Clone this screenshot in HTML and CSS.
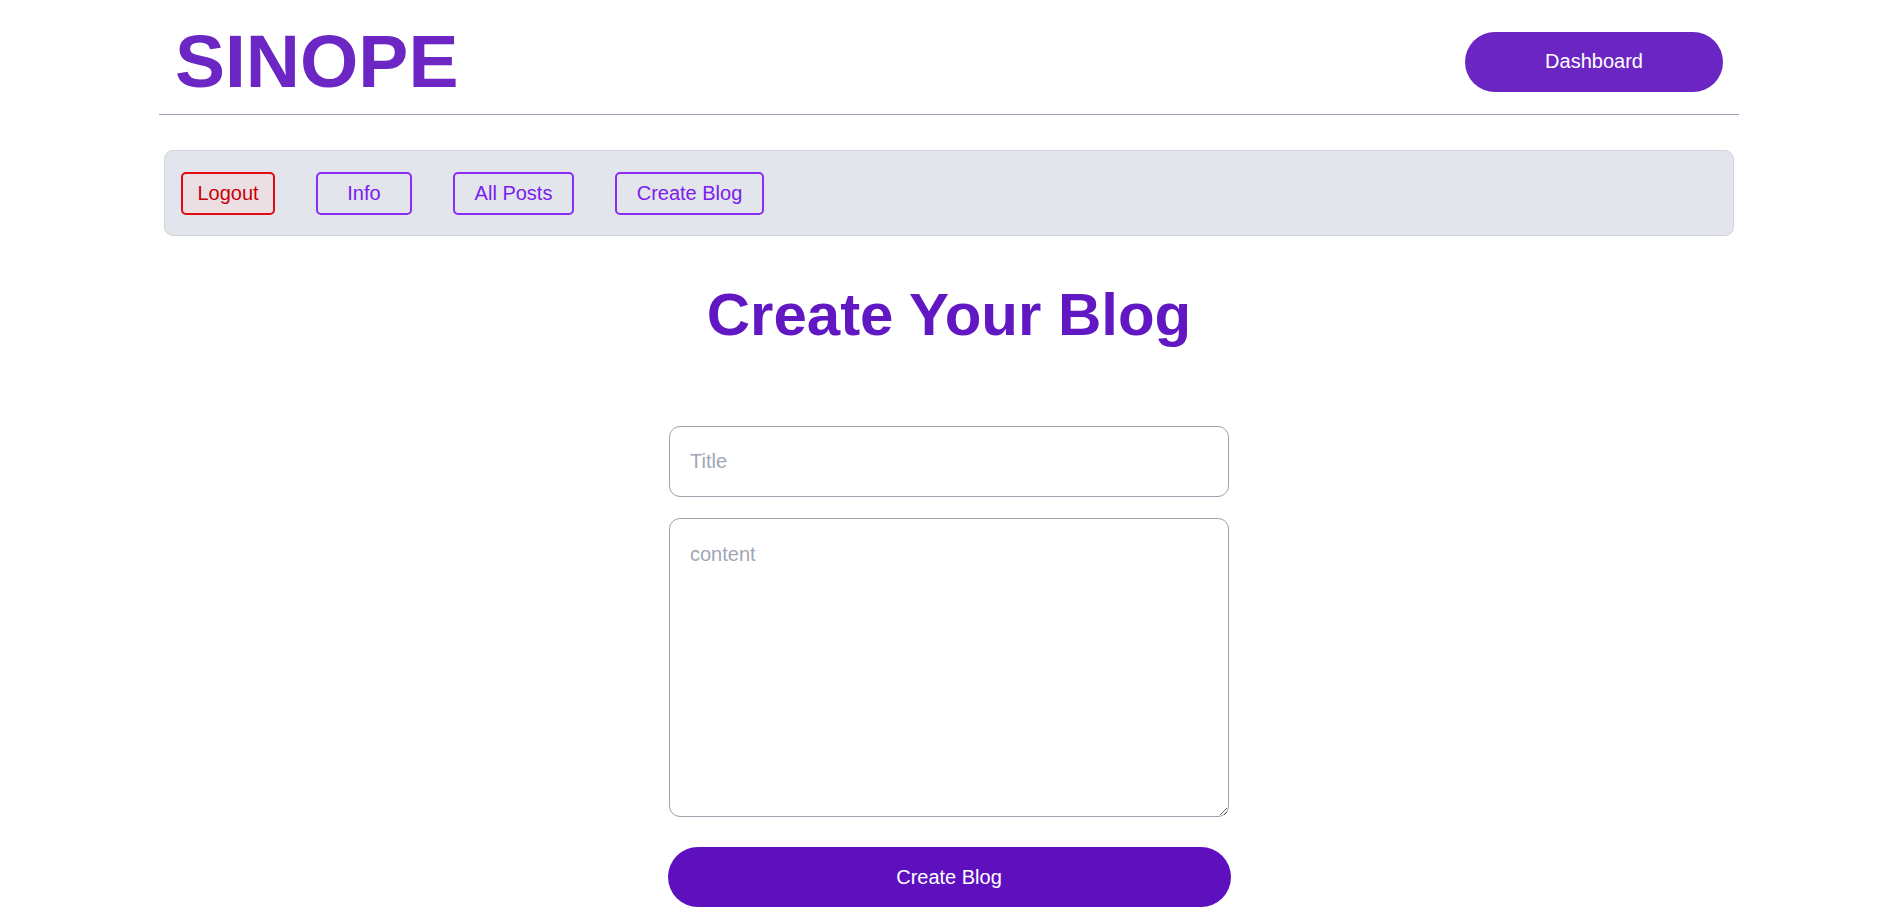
FILE: index.html
```html
<!DOCTYPE html>
<html lang="en">
<head>
<meta charset="utf-8">
<title>SINOPE - Create Blog</title>
<link rel="stylesheet" href="styles.css">
</head>
<body>
<div class="container">
  <header class="header">
    <div class="logo">SINOPE</div>
    <button class="dash-btn">Dashboard</button>
  </header>
  <nav class="nav">
    <button class="nav-btn nav-logout">Logout</button>
    <button class="nav-btn nav-info">Info</button>
    <button class="nav-btn nav-posts">All Posts</button>
    <button class="nav-btn nav-create">Create Blog</button>
  </nav>
  <main class="main">
    <h1 class="title">Create Your Blog</h1>
    <form class="form">
      <input class="field field-title" type="text" placeholder="Title">
      <textarea class="field field-content" placeholder="content"></textarea>
      <button type="button" class="submit-btn">Create Blog</button>
    </form>
  </main>
</div>
</body>
</html>
```
FILE: styles.css
```css
* { box-sizing: border-box; }
html, body { margin: 0; padding: 0; background: #ffffff; }
body { font-family: "Liberation Sans", Arial, sans-serif; }

.container {
  width: 1580px;
  margin: 0 auto;
}

.header {
  height: 115px;
  padding: 9px 16px 0 16px;
  border-bottom: 1px solid #9aa3b8;
  display: flex;
  align-items: center;
  justify-content: space-between;
}

.logo {
  font-size: 75px;
  line-height: 1;
  font-weight: 700;
  color: #6b26c4;
}

.dash-btn {
  width: 258px;
  height: 60px;
  border: none;
  border-radius: 30px;
  background: #6b25c3;
  color: #ffffff;
  font-family: "Liberation Sans", Arial, sans-serif;
  font-size: 20px;
  cursor: pointer;
}

.nav {
  margin: 35px 5px 0 5px;
  height: 86px;
  background: #e2e5eb;
  border: 1px solid #d1d5db;
  border-radius: 9px;
  padding: 0 16px;
  display: flex;
  align-items: center;
  gap: 41px;
}

.nav-btn {
  height: 43px;
  padding: 0;
  border: 2px solid #8a2cf3;
  border-radius: 5px;
  background: transparent;
  color: #7a20ee;
  font-family: "Liberation Sans", Arial, sans-serif;
  font-size: 20px;
  display: flex;
  align-items: center;
  justify-content: center;
  cursor: pointer;
}

.nav-logout {
  width: 94px;
  border-color: #e50914;
  background: #ecdfe3;
  color: #c8000a;
}
.nav-info { width: 96px; }
.nav-posts { width: 121px; }
.nav-create { width: 149px; }

.main {
  display: flex;
  flex-direction: column;
  align-items: center;
}

.title {
  margin: 49px 0 0 0;
  font-size: 60px;
  line-height: 1;
  font-weight: 700;
  color: #6117c2;
}

.form {
  margin-top: 81px;
  width: 563px;
  display: flex;
  flex-direction: column;
  align-items: center;
}

.field {
  width: 560px;
  border: 1px solid #9ca3af;
  border-radius: 11px;
  font-family: "Liberation Sans", Arial, sans-serif;
  font-size: 20px;
  color: #111827;
  background: #ffffff;
  outline: none;
}
.field::placeholder { color: #a0a7b3; }

.field-title {
  height: 71px;
  padding: 0 20px;
}

.field-content {
  margin-top: 21px;
  height: 299px;
  padding: 21px 20px 18px 20px;
  line-height: 28px;
  resize: vertical;
}

.submit-btn {
  margin-top: 30px;
  width: 563px;
  height: 60px;
  border: none;
  border-radius: 30px;
  background: #5e10bf;
  color: #ffffff;
  font-family: "Liberation Sans", Arial, sans-serif;
  font-size: 20px;
  cursor: pointer;
}
```
